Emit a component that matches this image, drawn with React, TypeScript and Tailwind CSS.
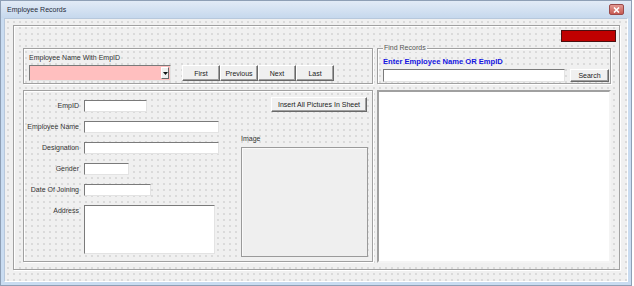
const dots =
  "bg-[#f0f0f0] bg-[radial-gradient(circle,#c2c2c2_0.55px,transparent_0.85px)] bg-[size:6px_6px]";

const font = "font-['Liberation_Sans',Arial,sans-serif]";

function Btn({ label, className = "" }: { label: string; className?: string }) {
  return (
    <button
      type="button"
      className={`flex items-center justify-center border border-t-white border-l-white border-r-[#696969] border-b-[#696969] bg-[#f0f0f0] text-[7px] leading-none text-[#222] shadow-[inset_-1px_-1px_0_#a0a0a0] ${className}`}
    >
      {label}
    </button>
  );
}

function Field({ w, h = "h-[12px]" }: { w: string; h?: string }) {
  return (
    <div
      className={`${w} ${h} border border-t-[#7a7a7a] border-l-[#7a7a7a] border-r-[#e3e3e3] border-b-[#e3e3e3] bg-white`}
    />
  );
}

function Row({ label, children }: { label: string; children: React.ReactNode }) {
  return (
    <div className="flex items-start">
      <span className="w-[56px] pr-[1px] pt-[2px] text-right text-[7px] leading-[8px] text-[#333]">
        {label}
      </span>
      <div className="ml-[4px]">{children}</div>
    </div>
  );
}

export default function App() {
  return (
    <div className={`h-[286px] w-[634px] bg-white ${font}`}>
      <div className="flex h-[286px] w-[632px] flex-col border border-[#8e9fb5] bg-[#c9dcf1]">
        {/* title bar */}
        <div className="flex h-[17px] items-center justify-between bg-[linear-gradient(#e2ebf6,#c6d8ed)] pl-[6px] pr-[7px]">
          <span className="text-[7px] leading-none text-[#1f2b3a]">Employee Records</span>
          <div className="flex h-[11px] w-[15px] items-center justify-center rounded-[2px] border border-[#9a4a4a] bg-[linear-gradient(#e39a94,#c75a52)]">
            <svg width="7" height="6" viewBox="0 0 7 6">
              <path d="M1 0.5 L6 5.5 M6 0.5 L1 5.5" stroke="white" strokeWidth="1.6" />
            </svg>
          </div>
        </div>

        {/* client area */}
        <div
          className={`mx-[3px] mb-[3px] flex-1 border border-t-[#b7c8dc] border-l-[#b7c8dc] border-r-white border-b-white pl-[8px] pr-[3px] pt-[6px] ${dots}`}
        >
          <div className="flex h-[245px] w-[607px] flex-col border border-[#a0a0a0] shadow-[inset_1px_1px_0_#fff,1px_1px_0_#fff]">
            {/* red block */}
            <div className="mr-[3px] mt-[4px] h-[12px] w-[55px] self-end border border-[#4b1010] bg-[#c00000]" />

            {/* top row */}
            <div className="ml-[9px] mt-[6px] flex gap-[4px]">
              <div className="flex h-[36px] w-[350px] flex-col border border-[#a0a0a0] pl-[5px] shadow-[inset_1px_1px_0_#fff,1px_1px_0_#fff]">
                <span className="mt-[5px] text-[7px] leading-[8px] text-[#333]">Employee Name With EmpID</span>
                <div className="mt-[3px] flex items-center">
                  <div className="flex h-[16px] w-[142px] items-stretch border border-t-[#7a7a7a] border-l-[#7a7a7a] border-r-[#e3e3e3] border-b-[#e3e3e3] bg-[#ffbfbf] p-[1px]">
                    <div className="flex-1" />
                    <div className="flex w-[8px] items-center justify-center border border-t-white border-l-white border-r-[#696969] border-b-[#696969] bg-[#f0f0f0]">
                      <svg width="5" height="3" viewBox="0 0 5 3">
                        <path d="M0 0 H5 L2.5 3 Z" fill="#111" />
                      </svg>
                    </div>
                  </div>
                  <div className="ml-[11px] flex">
                    <Btn label="First" className="h-[16px] w-[38px]" />
                    <Btn label="Previous" className="h-[16px] w-[38px]" />
                    <Btn label="Next" className="h-[16px] w-[38px]" />
                    <Btn label="Last" className="h-[16px] w-[38px]" />
                  </div>
                </div>
              </div>

              <div className="relative flex h-[36px] w-[234px] flex-col border border-[#a0a0a0] pl-[5px] shadow-[inset_1px_1px_0_#fff,1px_1px_0_#fff]">
                <span className="absolute -top-[5px] left-[5px] bg-[#f0f0f0] px-[1px] text-[7px] leading-[8px] text-[#555]">
                  Find Records
                </span>
                <span className="mt-[8px] text-[7.6px] font-bold leading-[9px] text-[#1414e0]">
                  Enter Employee Name OR EmpID
                </span>
                <div className="mt-[3px] flex items-center">
                  <Field w="w-[182px]" h="h-[13px]" />
                  <Btn label="Search" className="ml-[5px] h-[13px] w-[39px]" />
                </div>
              </div>
            </div>

            {/* bottom row */}
            <div className="ml-[9px] mt-[6px] flex gap-[4px]">
              <div className="flex h-[172px] w-[350px] border border-[#a0a0a0] shadow-[inset_1px_1px_0_#fff,1px_1px_0_#fff]">
                <div className="flex flex-col gap-[9px] pt-[9px]">
                  <Row label="EmpID">
                    <Field w="w-[63px]" />
                  </Row>
                  <Row label="Employee Name">
                    <Field w="w-[135px]" />
                  </Row>
                  <Row label="Designation">
                    <Field w="w-[135px]" />
                  </Row>
                  <Row label="Gender">
                    <Field w="w-[45px]" />
                  </Row>
                  <Row label="Date Of Joining">
                    <Field w="w-[67px]" />
                  </Row>
                  <Row label="Address">
                    <Field w="w-[131px]" h="h-[49px]" />
                  </Row>
                </div>

                <div className="ml-[22px] flex w-[127px] flex-col pt-[6px]">
                  <Btn label="Insert All Pictures In Sheet" className="mr-[1px] h-[15px] w-[96px] self-end" />
                  <span className="mt-[23px] text-[7px] leading-[8px] text-[#333]">Image</span>
                  <div className="mt-[4px] h-[110px] w-[127px] border border-[#9a9a9a] bg-[#efefef] shadow-[inset_1px_1px_0_#fafafa]" />
                </div>
              </div>

              <div className="h-[173px] w-[234px] border-2 border-t-[#a0a0a0] border-l-[#a0a0a0] border-r-[#f4f4f4] border-b-[#f4f4f4] bg-white" />
            </div>
          </div>
        </div>
      </div>
    </div>
  );
}
